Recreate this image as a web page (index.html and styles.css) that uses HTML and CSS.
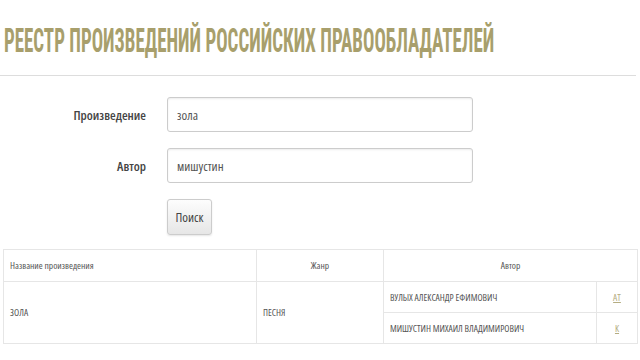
FILE: index.html
```html
<!DOCTYPE html>
<html lang="ru">
<head>
<meta charset="utf-8">
<link rel="stylesheet" href="styles.css">
</head>
<body>
<header class="head">
  <h1 class="title"><span class="title-text">РЕЕСТР ПРОИЗВЕДЕНИЙ РОССИЙСКИХ ПРАВООБЛАДАТЕЛЕЙ</span></h1>
</header>
<form class="search">
  <label class="lbl">Произведение</label>
  <input class="field" type="text" value="зола">
  <label class="lbl">Автор</label>
  <input class="field" type="text" value="мишустин">
  <span></span>
  <div><button class="btn" type="button">Поиск</button></div>
</form>
<table class="grid">
  <colgroup>
    <col class="c1"><col class="c2"><col class="c3"><col class="c4">
  </colgroup>
  <thead>
    <tr>
      <th class="left">Название произведения</th>
      <th>Жанр</th>
      <th colspan="2">Автор</th>
    </tr>
  </thead>
  <tbody>
    <tr>
      <td rowspan="2">ЗОЛА</td>
      <td rowspan="2">ПЕСНЯ</td>
      <td>ВУЛЫХ АЛЕКСАНДР ЕФИМОВИЧ</td>
      <td class="mid"><a href="#">АТ</a></td>
    </tr>
    <tr>
      <td>МИШУСТИН МИХАИЛ ВЛАДИМИРОВИЧ</td>
      <td class="mid"><a href="#">К</a></td>
    </tr>
  </tbody>
</table>
</body>
</html>
```
FILE: styles.css
```css
html, body {
  margin: 0;
  padding: 0;
  background: #fff;
}
body {
  font-family: "Open Sans", "DejaVu Sans", sans-serif;
  font-stretch: 75%;
  color: #444;
  width: 640px;
  height: 360px;
  overflow: hidden;
}
.head {
  margin: 0 4px 0 0;
  padding: 23px 0 0 4px;
  height: 52px;
  border-bottom: 1px solid #ddd;
  overflow: hidden;
}
.title {
  margin: 0;
  width: 600px;
  font-family: "Roboto Condensed", "Open Sans", sans-serif;
  font-stretch: normal;
  font-size: 34px;
  line-height: 34px;
  font-weight: bold;
  color: #a89f6c;
  white-space: nowrap;
}
.title-text {
  display: inline-block;
  transform: scaleX(0.557);
  transform-origin: left center;
}
.search {
  display: grid;
  grid-template-columns: 146px 306px;
  column-gap: 21px;
  row-gap: 16px;
  align-items: center;
  padding: 21px 0 0 0;
}
.lbl {
  justify-self: end;
  font-size: 13px;
  font-weight: 600;
  color: #444;
}
.field {
  box-sizing: border-box;
  height: 35px;
  width: 306px;
  margin: 0;
  border: 1px solid #ccc;
  border-radius: 3px;
  box-shadow: inset 0 1px 2px rgba(0,0,0,0.08);
  padding: 0 9px;
  font-family: inherit;
  font-stretch: 75%;
  font-size: 13px;
  font-weight: normal;
  color: #555;
}
.btn {
  box-sizing: border-box;
  width: 45px;
  height: 36px;
  margin: 0;
  border: 1px solid #ccc;
  border-radius: 3px;
  background: linear-gradient(#fdfdfd, #e6e6e6);
  box-shadow: 0 1px 2px rgba(0,0,0,0.1);
  font-family: inherit;
  font-stretch: 75%;
  font-size: 13px;
  color: #444;
  padding: 0;
}
.grid {
  margin: 14px 0 0 3px;
  width: 634px;
  border-collapse: collapse;
  table-layout: fixed;
  font-size: 9.5px;
  color: #555;
}
.c1 { width: 253px; }
.c2 { width: 127px; }
.c3 { width: 213px; }
.c4 { width: 41px; }
.grid th, .grid td {
  border: 1px solid #e6e6e6;
  padding: 0 6px;
  text-align: left;
  font-weight: normal;
}
.grid th {
  height: 31px;
  text-align: center;
}
.grid th.left { text-align: left; }
.grid td { height: 30px; }
.grid td.mid { text-align: center; }
.grid a {
  color: #b5ad82;
  text-decoration: underline;
}
```
